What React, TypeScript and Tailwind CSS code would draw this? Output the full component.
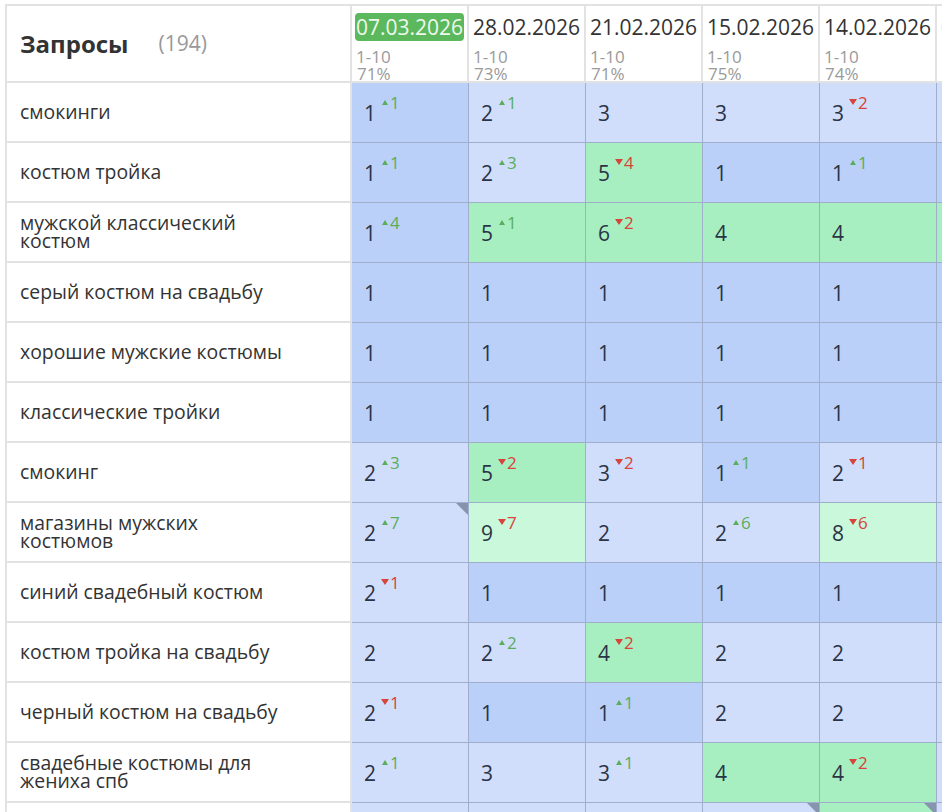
import React from "react";

type Tone = "m" | "l" | "g" | "lg";
type Cell = { v: number; d?: number; tone: Tone; mark?: boolean };

const toneClass: Record<Tone, string> = {
  m: "bg-[#bad0f8]",
  l: "bg-[#d1defb]",
  g: "bg-[#a7efc0]",
  lg: "bg-[#c9f8da]",
};

const dates = [
  { date: "07.03.2026", range: "1-10", pct: "71%", active: true },
  { date: "28.02.2026", range: "1-10", pct: "73%" },
  { date: "21.02.2026", range: "1-10", pct: "71%" },
  { date: "15.02.2026", range: "1-10", pct: "75%" },
  { date: "14.02.2026", range: "1-10", pct: "74%" },
  { date: "07.02.2026", range: "1-10", pct: "72%" },
];

const c = (v: number, tone: Tone, d?: number, mark?: boolean): Cell => ({ v, tone, d, mark });

const rows: { q: string; cells: Cell[] }[] = [
  { q: "смокинги", cells: [c(1, "m", 1), c(2, "l", 1), c(3, "l"), c(3, "l"), c(3, "l", -2), c(3, "l")] },
  { q: "костюм тройка", cells: [c(1, "m", 1), c(2, "l", 3), c(5, "g", -4), c(1, "m"), c(1, "m", 1), c(1, "m")] },
  { q: "мужской классический костюм", cells: [c(1, "m", 4), c(5, "g", 1), c(6, "g", -2), c(4, "g"), c(4, "g"), c(4, "g")] },
  { q: "серый костюм на свадьбу", cells: [c(1, "m"), c(1, "m"), c(1, "m"), c(1, "m"), c(1, "m"), c(1, "m")] },
  { q: "хорошие мужские костюмы", cells: [c(1, "m"), c(1, "m"), c(1, "m"), c(1, "m"), c(1, "m"), c(1, "m")] },
  { q: "классические тройки", cells: [c(1, "m"), c(1, "m"), c(1, "m"), c(1, "m"), c(1, "m"), c(1, "m")] },
  { q: "смокинг", cells: [c(2, "l", 3), c(5, "g", -2), c(3, "l", -2), c(1, "m", 1), c(2, "l", -1), c(2, "l")] },
  { q: "магазины мужских костюмов", cells: [c(2, "l", 7, true), c(9, "lg", -7), c(2, "l"), c(2, "l", 6), c(8, "lg", -6), c(2, "l")] },
  { q: "синий свадебный костюм", cells: [c(2, "l", -1), c(1, "m"), c(1, "m"), c(1, "m"), c(1, "m"), c(1, "m")] },
  { q: "костюм тройка на свадьбу", cells: [c(2, "l"), c(2, "l", 2), c(4, "g", -2), c(2, "l"), c(2, "l"), c(2, "l")] },
  { q: "черный костюм на свадьбу", cells: [c(2, "l", -1), c(1, "m"), c(1, "m", 1), c(2, "l"), c(2, "l"), c(2, "l")] },
  { q: "свадебные костюмы для жениха спб", cells: [c(2, "l", 1), c(3, "l"), c(3, "l", 1), c(4, "g"), c(4, "g", -2), c(3, "l")] },
  { q: "костюм на выпускной", cells: [c(3, "l"), c(3, "l"), c(3, "l"), c(3, "l", 0, true), c(4, "g", 0, true), c(3, "l")] },
];

const Delta = ({ d }: { d: number }) =>
  d > 0 ? (
    <span className="ml-[6px] -mt-[7px] flex items-center text-[17px] leading-[17px] text-[#5aad5a]">
      <span className="mr-[2px] h-0 w-0 border-x-[3px] border-b-[5px] border-x-transparent border-b-[#5aad5a]" />
      {d}
    </span>
  ) : (
    <span className="ml-[5px] -mt-[7px] flex items-center text-[17px] leading-[17px] text-[#d8433b]">
      <span className="mr-[1px] h-0 w-0 border-x-[4.5px] border-t-[6px] border-x-transparent border-t-[#d8433b]" />
      {-d}
    </span>
  );

const PosCell = ({ cell }: { cell: Cell }) => (
  <div
    className={`relative flex w-[117px] shrink-0 items-center border-r border-b border-[#9eaecb] pl-[12px] ${toneClass[cell.tone]}`}
  >
    <div className="flex items-start">
      <span className="text-[21px] leading-[24px] text-[#2a3447]">{cell.v}</span>
      {cell.d ? <Delta d={cell.d} /> : null}
    </div>
    {cell.mark && (
      <span className="absolute top-0 right-0 h-[12px] w-[12px] bg-[#8694ae] [clip-path:polygon(0_0,100%_0,100%_100%)]" />
    )}
  </div>
);

export default function App() {
  return (
    <div className="h-[812px] w-[942px] overflow-hidden bg-white pt-[4px] pl-[5px] font-['Open_Sans',sans-serif]">
      <div className="w-max border-t-2 border-l-2 border-[#e2e2e2]">
        <div className="flex h-[77px]">
          <div className="flex w-[345px] shrink-0 items-center border-r-2 border-b-2 border-[#e2e2e2] pl-[13px]">
            <span className="text-[24px] font-bold text-[#333]">Запросы</span>
            <span className="ml-[30px] text-[21px] text-[#999]">(194)</span>
          </div>
          {dates.map((h) => (
            <div
              key={h.date}
              className="flex w-[117px] shrink-0 flex-col border-r-2 border-b-2 border-[#e2e2e2] pt-[7px] pl-[3px]"
            >
              <span
                className={`w-max rounded-[4px] px-[1px] text-[21px] leading-[28px] ${
                  h.active ? "bg-[#5cb85c] text-[#eef9ee]" : "text-[#333]"
                }`}
              >
                {h.date}
              </span>
              <span className="mt-[7px] pl-[1px] text-[17px] leading-[17px] text-[#9a9a9a]">{h.range}</span>
              <span className="pl-[2px] text-[17px] leading-[17px] text-[#9a9a9a]">{h.pct}</span>
            </div>
          ))}
        </div>
        {rows.map((r) => (
          <div key={r.q} className="flex h-[60px]">
            <div className="flex w-[345px] shrink-0 items-center border-r-2 border-b-2 border-[#e2e2e2] pl-[13px]">
              <span className="max-w-[266px] text-[19.4px] leading-[18px] text-[#333]">{r.q}</span>
            </div>
            {r.cells.map((cell, i) => (
              <PosCell key={i} cell={cell} />
            ))}
          </div>
        ))}
      </div>
    </div>
  );
}
